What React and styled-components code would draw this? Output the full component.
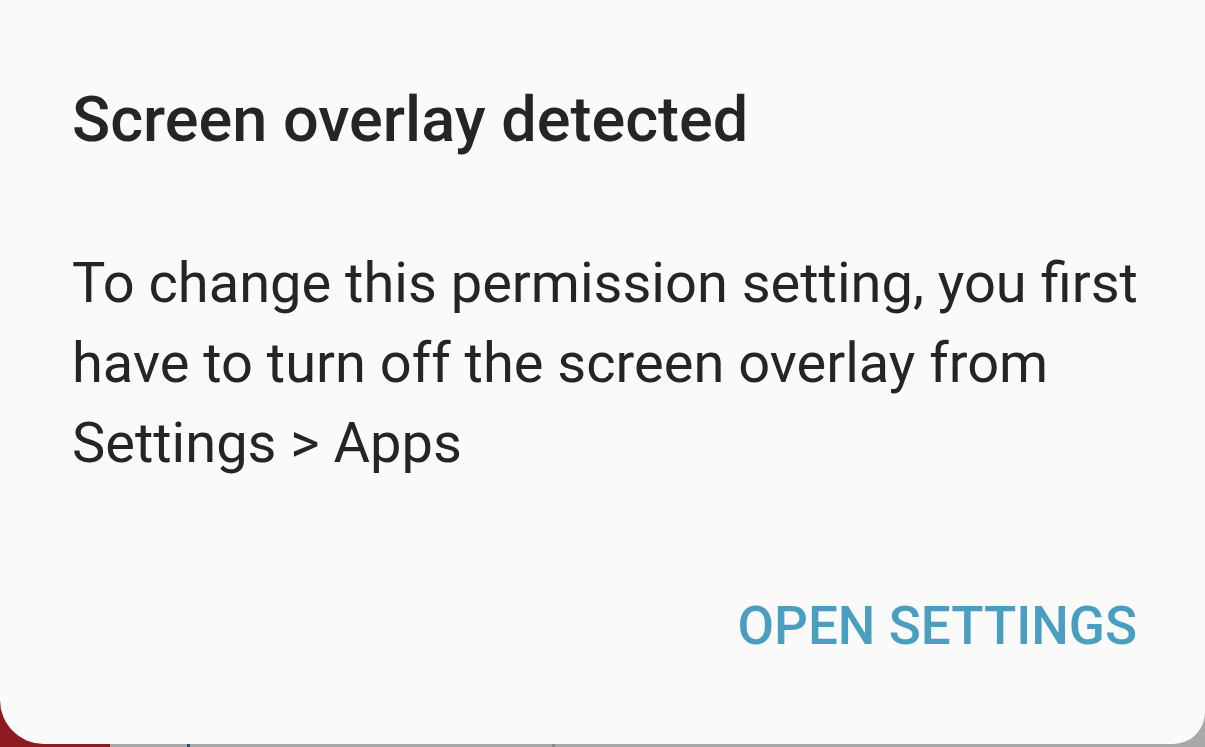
import React from "react";
import styled, { createGlobalStyle } from "styled-components";

const GlobalStyle = createGlobalStyle`
  html, body {
    margin: 0;
    padding: 0;
    width: 1205px;
    height: 747px;
    overflow: hidden;
  }
  body {
    font-family: Roboto, "Noto Sans", "Liberation Sans", sans-serif;
  }
`;

// Dimmed app that peeks out under the dialog
const Backdrop = styled.div`
  width: 1205px;
  height: 747px;
  background: linear-gradient(
    to right,
    #8d1a1f 0 110px,
    #a8a8a8 110px 187px,
    #2b4a86 187px 190px,
    #a8a8a8 190px 552px,
    #8a8a8a 552px 555px,
    #a8a8a8 555px
  );
  display: flex;
  flex-direction: column;
`;

const Dialog = styled.div`
  height: 744px;
  box-sizing: border-box;
  background: #fafafa;
  border-radius: 0 0 32px 44px;
  padding: 82px 52px 0 72px;
  display: flex;
  flex-direction: column;
`;

const Title = styled.h1`
  margin: 0;
  font-size: 63px;
  font-weight: 500;
  line-height: 76px;
  color: #252525;
`;

const Message = styled.p`
  margin: 85px 0 0;
  font-size: 56px;
  font-weight: 400;
  line-height: 80px;
  color: #252525;
`;

const Actions = styled.div`
  display: flex;
  justify-content: flex-end;
  margin: 113px 16px 0 0;
`;

const TextButton = styled.button`
  border: none;
  background: transparent;
  padding: 0;
  font-family: inherit;
  font-size: 53px;
  font-weight: 500;
  line-height: 60px;
  color: #4a9fc0;
  text-transform: uppercase;
  cursor: pointer;
`;

export default function App() {
  return (
    <>
      <GlobalStyle />
      <Backdrop>
        <Dialog>
          <Title>Screen overlay detected</Title>
          <Message>
            To change this permission setting, you first have to turn off the
            screen overlay from Settings &gt; Apps
          </Message>
          <Actions>
            <TextButton>Open settings</TextButton>
          </Actions>
        </Dialog>
      </Backdrop>
    </>
  );
}
